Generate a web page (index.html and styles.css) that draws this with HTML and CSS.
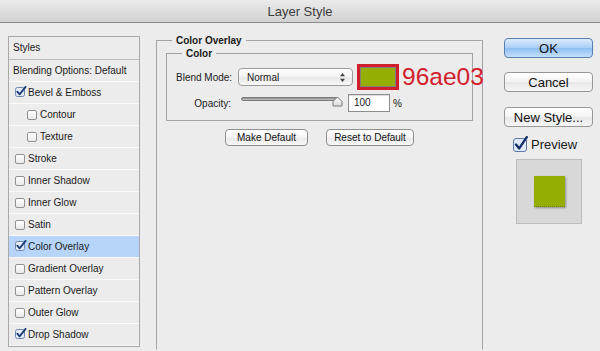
FILE: index.html
```html
<!DOCTYPE html>
<html>
<head>
<meta charset="utf-8">
<link rel="stylesheet" href="styles.css">
</head>
<body>
<div class="titlebar">Layer Style</div>
<div class="dialog">
  <div class="styles-panel">
    <div class="panel-head">Styles</div>
    <div class="row first">Blending Options: Default</div>
    <div class="row"><span class="cbw"><svg class="ck" viewBox="0 0 12 12" width="12" height="12"><rect x="0.5" y="1.5" width="9" height="9" rx="2" fill="#e4ecf7" stroke="#6d86aa"/><path d="M2.3 5.6 L4.6 8.4 L10.6 0.9" fill="none" stroke="#1c3c78" stroke-width="1.8" stroke-linecap="round" stroke-linejoin="round"/></svg></span>Bevel &amp; Emboss</div>
    <div class="row sub"><span class="cbw"><span class="cb"></span></span>Contour</div>
    <div class="row sub"><span class="cbw"><span class="cb"></span></span>Texture</div>
    <div class="row"><span class="cbw"><span class="cb"></span></span>Stroke</div>
    <div class="row"><span class="cbw"><span class="cb"></span></span>Inner Shadow</div>
    <div class="row"><span class="cbw"><span class="cb"></span></span>Inner Glow</div>
    <div class="row"><span class="cbw"><span class="cb"></span></span>Satin</div>
    <div class="row active"><span class="cbw"><svg class="ck" viewBox="0 0 12 12" width="12" height="12"><rect x="0.5" y="1.5" width="9" height="9" rx="2" fill="#e4ecf7" stroke="#6d86aa"/><path d="M2.3 5.6 L4.6 8.4 L10.6 0.9" fill="none" stroke="#1c3c78" stroke-width="1.8" stroke-linecap="round" stroke-linejoin="round"/></svg></span>Color Overlay</div>
    <div class="row"><span class="cbw"><span class="cb"></span></span>Gradient Overlay</div>
    <div class="row"><span class="cbw"><span class="cb"></span></span>Pattern Overlay</div>
    <div class="row"><span class="cbw"><span class="cb"></span></span>Outer Glow</div>
    <div class="row"><span class="cbw"><svg class="ck" viewBox="0 0 12 12" width="12" height="12"><rect x="0.5" y="1.5" width="9" height="9" rx="2" fill="#e4ecf7" stroke="#6d86aa"/><path d="M2.3 5.6 L4.6 8.4 L10.6 0.9" fill="none" stroke="#1c3c78" stroke-width="1.8" stroke-linecap="round" stroke-linejoin="round"/></svg></span>Drop Shadow</div>
  </div>

  <fieldset class="group">
    <legend>Color Overlay</legend>
    <fieldset class="subgroup">
      <legend>Color</legend>
      <div class="field-row">
        <span class="field-label">Blend Mode:</span>
        <div class="select"><span>Normal</span><svg width="5" height="9" viewBox="0 0 5 9"><path d="M2.5 0 L5 3.3 L0 3.3 Z M2.5 9 L5 5.7 L0 5.7 Z" fill="#444"/></svg></div>
        <div class="swatch-hl"><div class="swatch"></div></div>
        <span class="hex">96ae03</span>
      </div>
      <div class="field-row second">
        <span class="field-label right">Opacity:</span>
        <div class="slider">
          <div class="track"></div>
          <svg class="thumb" width="11" height="11" viewBox="0 0 11 11"><defs><linearGradient id="tg" x1="0" y1="0" x2="0" y2="1"><stop offset="0" stop-color="#ffffff"/><stop offset="1" stop-color="#dcdcdc"/></linearGradient></defs><path d="M1 10 L1 5.5 L5.5 1 L10 5.5 L10 10 Z" fill="url(#tg)" stroke="#7a7a7a" stroke-linejoin="round"/></svg>
        </div>
        <div class="num">100</div>
        <span class="pct">%</span>
      </div>
    </fieldset>
    <div class="btn-row">
      <button class="btn-sm w1">Make Default</button>
      <button class="btn-sm w2">Reset to Default</button>
    </div>
  </fieldset>

  <div class="actions">
    <button class="btn-lg ok">OK</button>
    <button class="btn-lg cancel">Cancel</button>
    <button class="btn-lg">New Style...</button>
    <div class="preview-row">
      <svg width="15" height="16" viewBox="0 0 15 16"><rect x="0.5" y="2.5" width="13" height="13" rx="2.5" fill="#dfe9f7" stroke="#5b7aa8"/><path d="M3 8.6 L6.2 12.4 L13.8 1.2" fill="none" stroke="#142f66" stroke-width="2.4" stroke-linecap="round" stroke-linejoin="round"/></svg>
      <span>Preview</span>
    </div>
    <div class="preview-box"><div class="preview-sq"></div></div>
  </div>
</div>
</body>
</html>
```
FILE: styles.css
```css
body {
  margin: 0;
  width: 600px;
  height: 351px;
  overflow: hidden;
  background: #ececec;
  font-family: "Liberation Sans", Arial, sans-serif;
  font-size: 10px;
  color: #1a1a1a;
}

.titlebar {
  height: 22px;
  line-height: 23px;
  text-align: center;
  font-size: 13px;
  color: #3c3c3c;
  background: linear-gradient(#ebebeb, #d2d2d2);
  border-bottom: 1px solid #8a8a8a;
}

.dialog {
  display: flex;
  align-items: flex-start;
  padding-left: 8px;
}

/* left style list */
.styles-panel {
  margin-top: 13px;
  width: 130px;
  border: 1px solid #a9a9a9;
  flex-shrink: 0;
}

.panel-head {
  height: 22px;
  line-height: 22px;
  padding-left: 4px;
  border-bottom: 1px solid #bdbdbd;
}

.row {
  height: 22px;
  box-sizing: border-box;
  border-bottom: 1px solid #fafafa;
  display: flex;
  align-items: center;
  padding-left: 6px;
  white-space: nowrap;
}

.row.first { padding-left: 4px; }
.row.sub { padding-left: 18px; }
.row.active { background: #b7d5fa; }

.cbw {
  width: 13px;
  display: flex;
  align-items: center;
  flex-shrink: 0;
}

.ck { display: block; margin-top: -2px; }

.cb {
  display: block;
  width: 8px;
  height: 8px;
  border: 1px solid #929292;
  border-radius: 2px;
  background: linear-gradient(#ffffff, #e9e9e9);
}

/* main group */
.group {
  margin: 11px 0 0 16px;
  width: 327px;
  height: 316px;
  box-sizing: border-box;
  padding: 0 9px;
  border: 1px solid #a3a3a3;
  border-bottom-color: #ececec;
  flex-shrink: 0;
  min-width: 0;
}

legend {
  margin-left: 6px;
  padding: 0 4px;
  font-weight: bold;
  font-size: 10px;
  line-height: 13px;
}

.subgroup {
  margin: 0;
  padding: 4px 9px 8px;
  border: 1px solid #a3a3a3;
  min-width: 0;
}

.field-row {
  display: flex;
  align-items: center;
  height: 26px;
  white-space: nowrap;
}

.field-row.second {
  height: 18px;
  margin-top: 4px;
}

.field-label {
  width: 62px;
  flex-shrink: 0;
}

.field-label.right {
  text-align: right;
  padding-right: 7px;
  box-sizing: border-box;
}

.select {
  width: 115px;
  height: 18px;
  box-sizing: border-box;
  flex-shrink: 0;
  border: 1px solid #9b9b9b;
  border-radius: 4px;
  background: linear-gradient(#ffffff, #f3f3f3 50%, #e8e8e8 51%, #f7f7f7);
  display: flex;
  align-items: center;
  justify-content: space-between;
  padding: 0 7px 0 8px;
}

.swatch-hl {
  width: 42px;
  height: 26px;
  box-sizing: border-box;
  flex-shrink: 0;
  margin-left: 4px;
  border: 3px solid #cf1f2d;
}

.swatch {
  height: 100%;
  box-sizing: border-box;
  border: 1px solid #808080;
  background: #96ae03;
}

.hex {
  margin-left: 3px;
  font-size: 24.5px;
  line-height: 26px;
  color: #d3202d;
  flex-shrink: 0;
}

.slider {
  position: relative;
  width: 102px;
  height: 18px;
  margin-left: 3px;
  flex-shrink: 0;
}

.track {
  margin-top: 3px;
  width: 97px;
  height: 4px;
  box-sizing: border-box;
  border: 1px solid #7d7d7d;
  border-radius: 2px;
  background: linear-gradient(#8d8d8d, #c4c4c4);
}

.thumb {
  position: absolute;
  left: 91px;
  top: 2px;
}

.num {
  width: 42px;
  height: 18px;
  box-sizing: border-box;
  flex-shrink: 0;
  margin-left: 5px;
  border: 1px solid #8c8c8c;
  background: #fff;
  padding-left: 5px;
  line-height: 16px;
  box-shadow: inset 0 1px 1px rgba(0,0,0,0.15);
}

.pct { margin-left: 3px; }

.btn-row {
  display: flex;
  justify-content: center;
  gap: 18px;
  margin-top: 8px;
}

button {
  font-family: "Liberation Sans", Arial, sans-serif;
  color: #111;
  padding: 0;
  cursor: default;
}

.btn-sm {
  height: 17px;
  font-size: 10px;
  border: 1px solid #8e8e8e;
  border-radius: 4px;
  background: linear-gradient(#ffffff, #f4f4f4 50%, #e9e9e9 51%, #f7f7f7);
}

.btn-sm.w1 { width: 83px; }
.btn-sm.w2 { width: 88px; }

/* right column */
.actions {
  margin: 15px 0 0 21px;
  display: flex;
  flex-direction: column;
  width: 89px;
  flex-shrink: 0;
}

.btn-lg {
  height: 20px;
  font-size: 13px;
  border: 1px solid #979797;
  border-radius: 4px;
  background: linear-gradient(#ffffff, #f3f3f3 50%, #e7e7e7 51%, #f6f6f6);
}

.btn-lg.ok {
  margin-bottom: 14px;
  border-color: #5a80b3;
  background: linear-gradient(#dcebfc, #a9cdf7 50%, #8fbdf3 51%, #c4e0fc);
}

.btn-lg.cancel { margin: 0 0 15px; }

.preview-row {
  margin: 9px 0 0 9px;
  height: 16px;
  display: flex;
  align-items: center;
  gap: 3px;
  font-size: 13px;
}

.preview-row svg { display: block; margin-top: -1px; }

.preview-box {
  margin: 7px 0 0 12px;
  width: 66px;
  height: 65px;
  box-sizing: border-box;
  border: 1px solid #bdbdbd;
  background: #d8d8d8;
  display: flex;
  align-items: center;
  justify-content: center;
}

.preview-sq {
  width: 31px;
  height: 31px;
  background: #96ae03;
  border-bottom: 1px dotted #6d7f00;
  box-sizing: border-box;
  box-shadow: 1px 1px 2px rgba(0,0,0,0.35);
}
```
